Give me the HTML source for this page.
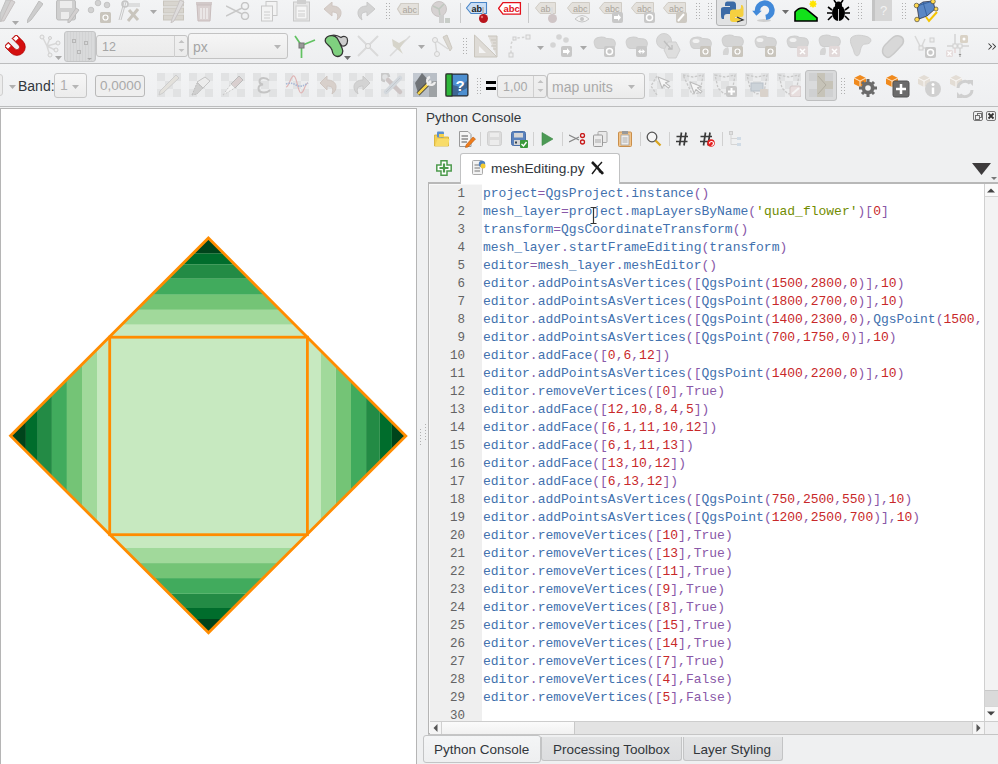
<!DOCTYPE html>
<html><head><meta charset="utf-8">
<style>
*{margin:0;padding:0;box-sizing:border-box}
html,body{width:998px;height:764px;overflow:hidden;background:#eff0f1;font-family:"Liberation Sans",sans-serif;position:relative}
.abs{position:absolute}
.tbrow{position:absolute;left:0;width:998px;background:linear-gradient(#f3f4f5,#eeeff1)}
.hsep{position:absolute;left:0;width:998px;height:1px;background:#bcbdbe}
.map{position:absolute;left:0;top:0}
.canvas{position:absolute;left:0;top:108px;width:417px;height:656px;background:#fff;border:1px solid #b5b5b5;border-bottom:none}
.title{position:absolute;left:426px;top:110px;font-size:13.5px;color:#31363b}
.editor{position:absolute;left:428px;top:182px;width:570px;height:553px;border:2px solid #b8b8b8;border-left:1px solid #b4b4b4;border-right:none;background:#fff;overflow:hidden}
.margin{position:absolute;left:0;top:0;width:53px;height:100%;background:#efefef;box-shadow:inset 1px 1px 0 #f8f8f8}
.nums{position:absolute;left:0;top:1px;width:36px;text-align:right;font-family:"Liberation Mono",monospace;font-size:12.5px;line-height:18px;color:#636363}
.code{position:absolute;left:54px;top:1px;font-family:"Liberation Mono",monospace;font-size:13px;line-height:18px;white-space:pre}
.code b{font-weight:normal}
.i{color:#4271ae}.o{color:#8959a8}.n{color:#c82829}.s{color:#718c00}.k{color:#8959a8}
.btab{position:absolute;top:736px;height:26px;font-size:13.5px;color:#31363b;border:1px solid #c3c4c5;border-radius:3px 3px 0 0;background:linear-gradient(#e6e7e8,#dcdddf);padding-top:4px;text-align:center}
.ico{position:absolute}
.lbl{position:absolute;font-size:13px;color:#a8a8a8}
.box{position:absolute;border:1px solid #bcbdbe;border-radius:3px;background:linear-gradient(#f5f5f5,#ebebeb)}
.dots{position:absolute;width:5px;background-image:radial-gradient(circle,#b0b0b0 0.7px,transparent 0.9px);background-size:3px 3px}
</style></head><body>
<div class="tbrow" style="top:0;height:28px"></div>
<div class="hsep" style="top:28px"></div>
<div class="tbrow" style="top:29px;height:34px"></div>
<div class="hsep" style="top:63px"></div>
<div class="tbrow" style="top:64px;height:42px"></div>
<div class="hsep" style="top:106px"></div>
<svg class="ico" style="left:0px;top:0px" width="16" height="22" viewBox="0 0 16 22" ><path d="M6 0L12 0L3 20L0 22L0 14Z" fill="#cfcfcf" stroke="#c0c0c0"/><path d="M11 0L15 2L4 21L1 21Z" fill="#d6d3d3" stroke="#c5c0c0"/></svg>
<svg class="ico" style="left:12px;top:21px" width="7" height="4" viewBox="0 0 7 4" ><path d="M0 0H7L3.5 4Z" fill="#a9a9a9"/></svg>
<svg class="ico" style="left:27px;top:1px" width="16" height="22" viewBox="0 0 16 22" ><path d="M12 0L16 3L4 19L0 22L1 18Z" fill="#cdcdcd" stroke="#bdbdbd" stroke-width="1"/></svg>
<svg class="ico" style="left:56px;top:0px" width="24" height="23" viewBox="0 0 24 23" ><rect x="0.5" y="0" width="19" height="20" rx="2" fill="#cfcfcf" stroke="#bdbdbd"/><rect x="4" y="1" width="12" height="7" fill="#ececec"/><rect x="5" y="12" width="8" height="7" fill="#ececec"/><path d="M20 8L23 10L14 22L12 23L12 20Z" fill="#d3d0d0" stroke="#bdbdbd"/></svg>
<svg class="ico" style="left:87px;top:0px" width="25" height="24" viewBox="0 0 25 24" ><circle cx="4" cy="10" r="2.8" fill="#d2d2d2" stroke="#c4c4c4"/><circle cx="11" cy="3" r="2.8" fill="#d2d2d2" stroke="#c4c4c4"/><circle cx="20" cy="5" r="2.8" fill="#d2d2d2" stroke="#c4c4c4"/><rect x="13" y="12" width="11" height="11" rx="1.5" fill="#c9c5bd"/><circle cx="18.5" cy="17.5" r="2.5" fill="none" stroke="#fff" stroke-width="1.2"/></svg>
<svg class="ico" style="left:118px;top:0px" width="26" height="23" viewBox="0 0 26 23" ><path d="M1 20L6 2M3 20L8 2" stroke="#c8c8c8" stroke-width="1"/><circle cx="7" cy="4" r="3" fill="none" stroke="#c4c4c4" stroke-width="1.5"/><path d="M9 4H22M9 6H22" stroke="#c8c8c8"/><path d="M10 21L20 9M11 10L20 20" stroke="#c9c5bd" stroke-width="3"/></svg>
<svg class="ico" style="left:150px;top:10px" width="7" height="4" viewBox="0 0 7 4" ><path d="M0 0H7L3.5 4Z" fill="#a9a9a9"/></svg>
<svg class="ico" style="left:163px;top:0px" width="22" height="23" viewBox="0 0 22 23" ><rect x="0.5" y="1" width="20" height="5" fill="#d8d5cf" stroke="#c9c5bd"/><rect x="0.5" y="8" width="20" height="5" fill="#d8d5cf" stroke="#c9c5bd"/><rect x="0.5" y="15" width="20" height="5" fill="#d8d5cf" stroke="#c9c5bd"/><path d="M17 0L21 2L11 21L8 23L9 19Z" fill="#dedcdc" stroke="#c8c4c4"/></svg>
<svg class="ico" style="left:195px;top:0px" width="19" height="22" viewBox="0 0 19 22" ><rect x="1" y="2" width="16" height="3" fill="#d2c9c9"/><path d="M2 5H16L15 21H3Z" fill="#d9d0d0" stroke="#c9bdbd"/><path d="M6 8V19M9 8V19M12 8V19" stroke="#f0eded" stroke-width="1.5"/></svg>
<svg class="ico" style="left:226px;top:2px" width="24" height="18" viewBox="0 0 24 18" ><circle cx="19" cy="4" r="3.5" fill="none" stroke="#c5c5c5" stroke-width="1.5"/><circle cx="19" cy="14" r="3.5" fill="none" stroke="#c5c5c5" stroke-width="1.5"/><path d="M0 4L16 12M0 14L16 6" stroke="#c8c8c8" stroke-width="1.5"/></svg>
<svg class="ico" style="left:261px;top:1px" width="18" height="21" viewBox="0 0 18 21" ><rect x="5" y="0.5" width="11" height="14" fill="#f3f3f3" stroke="#c8c8c8"/><rect x="0.5" y="5" width="11" height="15" fill="#f3f3f3" stroke="#c8c8c8"/><path d="M3 11H9M3 14H9M3 17H9" stroke="#cdcdcd"/></svg>
<svg class="ico" style="left:293px;top:0px" width="18" height="22" viewBox="0 0 18 22" ><rect x="0.5" y="2" width="16" height="19" fill="#e6e6e6" stroke="#c8c8c8"/><rect x="4" y="0" width="9" height="4" fill="#cfcfcf"/><rect x="3" y="6" width="11" height="13" fill="#f5f5f5" stroke="#d0d0d0"/><path d="M5 11H12M5 14H12M5 16H12" stroke="#cdcdcd"/></svg>
<svg class="ico" style="left:324px;top:2px" width="20" height="19" viewBox="0 0 20 19" ><path d="M8 0L0 7L8 14V10C13 10 15 12 13 18C19 14 19 4 8 4Z" fill="#d8d0cb" stroke="#cfc6c1"/></svg>
<svg class="ico" style="left:355px;top:2px" width="20" height="19" viewBox="0 0 20 19" ><path d="M12 0L20 7L12 14V10C7 10 5 12 7 18C1 14 1 4 12 4Z" fill="#d3d3d3" stroke="#c9c9c9"/></svg>
<div class="dots" style="left:385px;top:2px;height:18px"></div>
<svg class="ico" style="left:397px;top:3px" width="22" height="12" viewBox="0 0 22 12" ><path d="M4 0.5H21.5V11.5H4L0.5 6Z" fill="#e4e1dc" stroke="#d0ccc5" stroke-width="1.2"/><text x="5.5" y="9.5" font-family="Liberation Sans" font-size="9" fill="#aaa59d">abc</text></svg>
<svg class="ico" style="left:430px;top:1px" width="23" height="22" viewBox="0 0 23 22" ><circle cx="9" cy="8" r="7.5" fill="#d6d2d2" stroke="#c9c4c4"/><path d="M3 5L9 8L14 3M9 8L10 15" stroke="#bfc8bf" stroke-width="1.5" fill="none"/><rect x="9" y="14" width="5" height="8" fill="#cfcfcf"/><rect x="15" y="17" width="5" height="5" fill="#c8cdc8"/></svg>
<div class="abs" style="left:460px;top:3px;width:1px;height:20px;background:#c8c9ca"></div>
<svg class="ico" style="left:466px;top:2px" width="24" height="22" viewBox="0 0 24 22" ><path d="M5 0.5H20.5V11.5H5L0.5 6Z" fill="#c9def5" stroke="#4a86c8" stroke-width="1.1"/><text x="5.5" y="9.5" font-family="Liberation Sans" font-size="9" font-weight="bold" fill="#1a1a1a">ab</text><path d="M17 5V14" stroke="#bbb" stroke-width="2"/><circle cx="17.5" cy="16.5" r="4.5" fill="#b8141c"/><circle cx="16" cy="15" r="1.2" fill="#e07070"/></svg>
<svg class="ico" style="left:498px;top:2px" width="24" height="13" viewBox="0 0 24 13" ><path d="M5 0.6H22.4V12.2H5L0.6 6.4Z" fill="#fff" stroke="#e3111b" stroke-width="1.3"/><text x="5.5" y="10.2" font-family="Liberation Sans" font-size="9.5" font-weight="bold" fill="#e3111b">abc</text></svg>
<div class="abs" style="left:528px;top:3px;width:1px;height:20px;background:#c8c9ca"></div>
<svg class="ico" style="left:535px;top:2px" width="24" height="22" viewBox="0 0 24 22" ><path d="M5 0.5H20.5V11.5H5L0.5 6Z" fill="#e4e1dc" stroke="#d0ccc5"/><text x="5.5" y="9.5" font-family="Liberation Sans" font-size="9" fill="#aaa59d">ab</text><path d="M17 5V14" stroke="#ddd" stroke-width="2"/><circle cx="17.5" cy="16.5" r="4.5" fill="#cfc5c6"/></svg>
<svg class="ico" style="left:567px;top:2px" width="24" height="21" viewBox="0 0 24 21" ><path d="M5 0.5H22.5V11.5H5L0.5 6Z" fill="#e4e1dc" stroke="#d0ccc5"/><text x="6" y="9.5" font-family="Liberation Sans" font-size="9" fill="#aaa59d">abc</text><path d="M8 17Q15 10 22 17Q15 23 8 17Z" fill="#f2f2f2" stroke="#c6c6c6"/><circle cx="15" cy="17" r="2" fill="#c6c6c6"/></svg>
<svg class="ico" style="left:599px;top:2px" width="25" height="21" viewBox="0 0 25 21" ><path d="M5 0.5H22.5V11.5H5L0.5 6Z" fill="#e4e1dc" stroke="#d0ccc5"/><text x="6" y="9.5" font-family="Liberation Sans" font-size="9" fill="#aaa59d">abc</text><rect x="13" y="10" width="11" height="11" rx="2" fill="#c8c8c8"/><path d="M15 14H19V12L22 15.5L19 19V17H15Z" fill="#fff"/></svg>
<svg class="ico" style="left:631px;top:2px" width="25" height="21" viewBox="0 0 25 21" ><path d="M5 0.5H22.5V11.5H5L0.5 6Z" fill="#e4e1dc" stroke="#d0ccc5"/><text x="6" y="9.5" font-family="Liberation Sans" font-size="9" fill="#aaa59d">abc</text><rect x="13" y="10" width="11" height="11" rx="2" fill="#c8c8c8"/><circle cx="18.5" cy="15.5" r="3" fill="none" stroke="#fff" stroke-width="1.5"/></svg>
<svg class="ico" style="left:663px;top:2px" width="25" height="21" viewBox="0 0 25 21" ><path d="M5 0.5H22.5V11.5H5L0.5 6Z" fill="#e4e1dc" stroke="#d0ccc5"/><text x="6" y="9.5" font-family="Liberation Sans" font-size="9" fill="#aaa59d">abc</text><rect x="13" y="10" width="11" height="11" rx="2" fill="#cdc9c2"/><path d="M15 19L21 12" stroke="#fff" stroke-width="2"/></svg>
<div class="dots" style="left:695px;top:2px;height:18px"></div>
<div class="dots" style="left:707px;top:2px;height:18px"></div>
<div class="abs" style="left:716px;top:-3px;width:31px;height:29px;border:1px solid #b3b4b5;border-radius:3px;background:#e1e2e3"></div>
<svg class="ico" style="left:721px;top:1px" width="24" height="22" viewBox="0 0 24 22" ><path d="M6 0.5H12Q15 0.5 15 4V11Q15 13 12 13H6Q3 13 3 16V18H1.5Q0 18 0 14V8Q0 6 3 6H9V5H4V3Q4 0.5 6 0.5Z" fill="#3b6aa6"/><path d="M18 21H12Q9 21 9 18V11Q9 8.5 12 8.5H17Q20 8.5 20 6V4H20.5Q22.5 4 22.5 8V14Q22.5 16 20 16H14V17H19V19Q19 21 18 21Z" fill="#f5d040"/><path d="M16 16L22 19L16 21" fill="none" stroke="#333" stroke-width="1.3"/></svg>
<svg class="ico" style="left:748px;top:0px" width="28" height="24" viewBox="0 0 28 24" ><ellipse cx="16" cy="20.5" rx="7" ry="1.5" fill="#cfcfcf"/><path d="M17.8 17.4A7.2 7.2 0 1 0 9.6 11.2" fill="none" stroke="#4189d9" stroke-width="5.5"/><path d="M4.2 10.8L13.8 10.8L8.4 15.8Z" fill="#4189d9"/></svg>
<svg class="ico" style="left:782px;top:10px" width="7" height="4" viewBox="0 0 7 4" ><path d="M0 0H7L3.5 4Z" fill="#6d6d6d"/></svg>
<svg class="ico" style="left:794px;top:0px" width="25" height="22" viewBox="0 0 25 22" ><path d="M1 21V12Q6 6 12 9L23 18V21Z" fill="#12e21a" stroke="#000" stroke-width="1.6"/><circle cx="19" cy="4" r="3" fill="#ffe400"/><path d="M19 0V8M15 4H23M16 1L22 7M22 1L16 7" stroke="#ffe400" stroke-width="0.8"/></svg>
<svg class="ico" style="left:827px;top:0px" width="23" height="22" viewBox="0 0 23 22" ><ellipse cx="11.5" cy="13" rx="6.5" ry="8" fill="#000"/><circle cx="11.5" cy="5" r="3.5" fill="#000"/><path d="M1 7L5 10M22 7L18 10M0 13H5M23 13H18M1 20L5 16M22 20L18 16M7 0L9 3M16 0L14 3" stroke="#000" stroke-width="1.6"/><path d="M11.5 9V21" stroke="#fff" stroke-width="0.8"/></svg>
<div class="dots" style="left:857px;top:2px;height:18px"></div>
<svg class="ico" style="left:872px;top:0px" width="22" height="22" viewBox="0 0 22 22" ><rect x="0" y="0" width="20" height="21" fill="#d6d6d6"/><rect x="0" y="0" width="3" height="21" fill="#c4c4c4"/><text x="11.5" y="15" text-anchor="middle" font-family="Liberation Sans" font-size="13" fill="#f2f2f2">?</text></svg>
<div class="dots" style="left:901px;top:2px;height:18px"></div>
<svg class="ico" style="left:5px;top:35px" width="24" height="24" viewBox="0 0 24 24" ><g transform="rotate(-45 12 12) translate(3.5 2.5) scale(1.05)"><path d="M0 0H5.5V9A2.5 2.5 0 0 0 10.5 9V0H16V9A8 8 0 0 1 0 9Z" fill="#d40f0f" stroke="#a00" stroke-width="0.6"/><rect x="0.5" y="0.5" width="4.5" height="4" fill="#fff" stroke="#b00" stroke-width="0.7"/><rect x="11" y="0.5" width="4.5" height="4" fill="#fff" stroke="#b00" stroke-width="0.7"/></g></svg>
<svg class="ico" style="left:38px;top:34px" width="24" height="24" viewBox="0 0 24 24" ><path d="M4 2L9 12L12 22M9 12L12 4M9 12L20 9M9 12L17 16" stroke="#d8d8d8" stroke-width="1.5" fill="none"/><circle cx="4" cy="3" r="2" fill="#eee" stroke="#cfcfcf"/><circle cx="20" cy="9" r="2" fill="#eee" stroke="#cfcfcf"/><circle cx="12" cy="21" r="2" fill="#eee" stroke="#cfcfcf"/><circle cx="18" cy="16" r="2" fill="#eee" stroke="#cfcfcf"/><circle cx="12" cy="4" r="1.5" fill="#eee" stroke="#cfcfcf"/></svg>
<svg class="ico" style="left:55px;top:56px" width="7" height="4" viewBox="0 0 7 4" ><path d="M0 0H7L3.5 4Z" fill="#a9a9a9"/></svg>
<div class="abs" style="left:64px;top:31px;width:32px;height:31px;border:1px solid #c4c5c6;border-radius:3px;background:repeating-linear-gradient(90deg,#d9dadb 0 2px,#d2d3d4 2px 3px)"></div>
<svg class="ico" style="left:64px;top:31px" width="32" height="31" viewBox="0 0 32 31" ><rect x="8.5" y="8.5" width="3" height="3" fill="none" stroke="#b7b7b7"/><rect x="20.5" y="10.5" width="3" height="3" fill="none" stroke="#b7b7b7"/><rect x="13.5" y="19.5" width="3" height="3" fill="none" stroke="#b7b7b7"/><path d="M23 27H28L25.5 29Z" fill="#aaa"/></svg>
<div class="box" style="left:96px;top:35px;width:92px;height:22px;background:linear-gradient(#f0f0f0,#ebebeb);border-color:#c3c3c3"></div>
<div class="abs" style="left:174px;top:36px;width:1px;height:21px;background:#cfcfcf"></div>
<svg class="ico" style="left:177px;top:37px" width="9" height="18" viewBox="0 0 9 18" ><path d="M1.5 6L4.5 3L7.5 6Z" fill="#c2c2c2"/><path d="M1.5 12L4.5 15L7.5 12Z" fill="#c2c2c2"/></svg>
<div class="lbl" style="left:102px;top:40px;font-size:12.5px;color:#a5a5a5">12</div>
<div class="box" style="left:188px;top:33px;width:100px;height:26px;border-color:#c3c3c3;background:linear-gradient(#f6f6f6,#ebebeb)"></div>
<div class="lbl" style="left:193px;top:38.5px;font-size:14px;color:#a5a5a5">px</div>
<svg class="ico" style="left:274px;top:45px" width="7" height="4" viewBox="0 0 7 4" ><path d="M0 0H7L3.5 4Z" fill="#b6b6b6"/></svg>
<svg class="ico" style="left:293px;top:35px" width="23" height="23" viewBox="0 0 23 23" ><path d="M8.5 10.5L2 1M8.5 10.5L22 5M8.5 10.5V23" stroke="#62c262" stroke-width="1.7" fill="none"/><rect x="6" y="8" width="5" height="5" fill="#999" stroke="#777"/></svg>
<svg class="ico" style="left:324px;top:34px" width="26" height="27" viewBox="0 0 26 27" ><path d="M7 1.5C10 0.5 14 1.5 17 3.5C20 1.5 24 2.5 23.5 7C23.5 11 20.5 12.5 18 12C16 10 14 6 11 3Z" fill="#cdcdcd" stroke="#3a3a3a" stroke-width="1.2"/><path d="M3 3C6 0.5 11 1.5 13 4C15 7 16 10 18 14C20 18 18 22.5 13.5 22.5C10 22.5 8.5 19.5 8 16C7 12 1.5 10.5 1.2 7C1 5 1.5 4 3 3Z" fill="#7fd07f" stroke="#333" stroke-width="1.3"/></svg>
<svg class="ico" style="left:344px;top:56px" width="7" height="4" viewBox="0 0 7 4" ><path d="M0 0H7L3.5 4Z" fill="#6d6d6d"/></svg>
<svg class="ico" style="left:356px;top:34px" width="24" height="24" viewBox="0 0 24 24" ><path d="M2 2L22 22M22 2L2 22" stroke="#dadada" stroke-width="2"/><circle cx="12" cy="12" r="2.5" fill="#eee" stroke="#cfcfcf"/></svg>
<svg class="ico" style="left:388px;top:34px" width="24" height="24" viewBox="0 0 24 24" ><path d="M2 22L22 2" stroke="#dadada" stroke-width="1.6"/><path d="M4 5L11 9L18 5L12 14L15 20L9 15L5 12Z" fill="#d6d4ca"/></svg>
<svg class="ico" style="left:418px;top:45px" width="7" height="4" viewBox="0 0 7 4" ><path d="M0 0H7L3.5 4Z" fill="#a9a9a9"/></svg>
<svg class="ico" style="left:430px;top:34px" width="24" height="24" viewBox="0 0 24 24" ><path d="M5 6L18 15M5 6L7 20" stroke="#d8d8d8" stroke-width="1.5"/><circle cx="5" cy="6" r="2.5" fill="#eee" stroke="#cfcfcf"/><circle cx="7" cy="20" r="2.5" fill="#eee" stroke="#cfcfcf"/><path d="M13 3L17 1L22 14L20 17Z" fill="#dad7d0" stroke="#cdc9c1"/></svg>
<div class="dots" style="left:462px;top:37px;height:18px"></div>
<svg class="ico" style="left:474px;top:34px" width="26" height="24" viewBox="0 0 26 24" ><path d="M0.5 1V23H23Z" fill="#dedbd6" stroke="#c9c5bd"/><path d="M5 12V19H12Z" fill="#f4f4f4"/><path d="M14 2H23V23" fill="#dedbd6" stroke="#c9c5bd"/><path d="M17 6H22M19 9H22M17 12H22M19 15H22" stroke="#c9c5bd"/></svg>
<svg class="ico" style="left:508px;top:34px" width="24" height="24" viewBox="0 0 24 24" ><path d="M3 19V12Q3 6 9 4L18 3" stroke="#d3d3d3" stroke-width="1.5" stroke-dasharray="2.5 2" fill="none"/><rect x="1" y="19" width="4" height="4" fill="#eee" stroke="#cdcdcd"/><rect x="18" y="1" width="4" height="4" fill="#eee" stroke="#cdcdcd"/><rect x="5" y="3" width="3" height="3" fill="#eee" stroke="#cdcdcd"/></svg>
<svg class="ico" style="left:537px;top:46px" width="7" height="4" viewBox="0 0 7 4" ><path d="M0 0H7L3.5 4Z" fill="#a9a9a9"/></svg>
<svg class="ico" style="left:549px;top:34px" width="25" height="25" viewBox="0 0 25 25" ><circle cx="4" cy="11" r="2.8" fill="#d5d5d5"/><circle cx="10" cy="3" r="2.8" fill="#d5d5d5"/><circle cx="17" cy="6" r="2.8" fill="#d5d5d5"/><rect x="12" y="12" width="11" height="11" rx="2" fill="#c8c8c8"/><path d="M14 16H18V14L21 17.5L18 21V19H14Z" fill="#fff"/></svg>
<svg class="ico" style="left:580px;top:46px" width="7" height="4" viewBox="0 0 7 4" ><path d="M0 0H7L3.5 4Z" fill="#a9a9a9"/></svg>
<svg class="ico" style="left:592px;top:34px" width="24" height="25" viewBox="0 0 24 25" ><path transform="translate(1 3) scale(1.3)" d="M1 5C0 0,7 -1,10 1C13 2,16 0,17 4C18 8,14 10,10 9C6 8,2 11,1 5Z" fill="#d5d5d5" stroke="#cfcfcf" stroke-width="0.8"/><rect x="12" y="12" width="11" height="11" rx="2" fill="#c8c8c8"/><circle cx="17.5" cy="17.5" r="3" fill="none" stroke="#fff" stroke-width="1.5"/></svg>
<svg class="ico" style="left:624px;top:34px" width="24" height="25" viewBox="0 0 24 25" ><path transform="translate(1 3) scale(1.3)" d="M1 5C0 0,7 -1,10 1C13 2,16 0,17 4C18 8,14 10,10 9C6 8,2 11,1 5Z" fill="#d5d5d5" stroke="#cfcfcf" stroke-width="0.8"/><rect x="12" y="12" width="11" height="11" rx="2" fill="#c8c8c8"/><path d="M14 17.5L16.5 15V20ZM21 17.5L18.5 15V20Z" fill="#fff"/><path d="M16 17.5H19" stroke="#fff" stroke-width="1.5"/></svg>
<svg class="ico" style="left:656px;top:33px" width="25" height="26" viewBox="0 0 25 26" ><circle cx="8" cy="8" r="7.5" fill="#d8d8d8" stroke="#d0d0d0"/><path d="M12 9H20L24 17L20 25H12L8 17Z" fill="#dedede" stroke="#cfcfcf"/><path d="M8 8L15 16M12 16H16V12" stroke="#bdbdbd" stroke-width="1.3" fill="none"/></svg>
<svg class="ico" style="left:688px;top:34px" width="24" height="25" viewBox="0 0 24 25" ><path transform="translate(1 3) scale(1.3)" d="M1 5C0 0,7 -1,10 1C13 2,16 0,17 4C18 8,14 10,10 9C6 8,2 11,1 5Z" fill="#d5d5d5" stroke="#cfcfcf" stroke-width="0.8"/><ellipse cx="8" cy="7" rx="3.5" ry="2" fill="#f2f2f2"/><rect x="12" y="12" width="11" height="11" rx="1.5" fill="#c9c5bd"/><circle cx="17.5" cy="17.5" r="2.5" fill="none" stroke="#fff" stroke-width="1.2"/></svg>
<svg class="ico" style="left:720px;top:34px" width="24" height="25" viewBox="0 0 24 25" ><path transform="translate(1 1) scale(1.3)" d="M1 5C0 0,7 -1,10 1C13 2,16 0,17 4C18 8,14 10,10 9C6 8,2 11,1 5Z" fill="#d5d5d5" stroke="#cfcfcf" stroke-width="0.8"/><path d="M3 21Q2 14 8 13Q10 17 8 21Z" fill="#d5d5d5"/><rect x="12" y="12" width="11" height="11" rx="1.5" fill="#c9c5bd"/><circle cx="17.5" cy="17.5" r="2.5" fill="none" stroke="#fff" stroke-width="1.2"/></svg>
<svg class="ico" style="left:753px;top:34px" width="24" height="25" viewBox="0 0 24 25" ><path transform="translate(1 2) scale(1.3)" d="M1 5C0 0,7 -1,10 1C13 2,16 0,17 4C18 8,14 10,10 9C6 8,2 11,1 5Z" fill="#d5d5d5" stroke="#cfcfcf" stroke-width="0.8"/><ellipse cx="7" cy="6" rx="3.5" ry="2" fill="#f2f2f2"/><rect x="12" y="12" width="11" height="11" rx="1.5" fill="#c9c5bd"/><circle cx="17.5" cy="17.5" r="2.5" fill="none" stroke="#fff" stroke-width="1.2"/></svg>
<svg class="ico" style="left:785px;top:34px" width="24" height="25" viewBox="0 0 24 25" ><path transform="translate(1 2) scale(1.3)" d="M1 5C0 0,7 -1,10 1C13 2,16 0,17 4C18 8,14 10,10 9C6 8,2 11,1 5Z" fill="#d5d5d5" stroke="#cfcfcf" stroke-width="0.8"/><ellipse cx="8" cy="6" rx="3.5" ry="2" fill="#f2f2f2"/><rect x="12" y="12" width="11" height="11" rx="1.5" fill="#e2d9d9"/><path d="M15 15L20 20M20 15L15 20" stroke="#fff" stroke-width="1.5"/></svg>
<svg class="ico" style="left:817px;top:34px" width="24" height="25" viewBox="0 0 24 25" ><path transform="translate(1 1) scale(1.3)" d="M1 5C0 0,7 -1,10 1C13 2,16 0,17 4C18 8,14 10,10 9C6 8,2 11,1 5Z" fill="#d5d5d5" stroke="#cfcfcf" stroke-width="0.8"/><path d="M3 21Q2 14 8 13Q10 17 8 21Z" fill="#d5d5d5"/><rect x="12" y="12" width="11" height="11" rx="1.5" fill="#e2d9d9"/><path d="M15 15L20 20M20 15L15 20" stroke="#fff" stroke-width="1.5"/></svg>
<svg class="ico" style="left:849px;top:34px" width="24" height="25" viewBox="0 0 24 25" ><path d="M2 4C5 0 14 1 19 3C24 5 22 10 17 10C13 10 12 13 11 18C10 23 6 23 5 18C4 13 0 9 2 4Z" fill="#d8d8d8" stroke="#cfcfcf"/></svg>
<svg class="ico" style="left:881px;top:34px" width="24" height="25" viewBox="0 0 24 25" ><path d="M4 22C0 19 1 13 6 9C10 5 13 1 18 2C23 3 24 8 20 12C16 16 14 19 10 22C8 24 6 24 4 22Z" fill="#d8d8d8" stroke="#c9c9c9" stroke-width="1.5"/></svg>
<svg class="ico" style="left:913px;top:34px" width="24" height="25" viewBox="0 0 24 25" ><path d="M2 2L8 14L12 5M8 14H19" stroke="#d8d8d8" stroke-width="1.5" fill="none"/><rect x="6" y="12" width="4" height="4" fill="#eee" stroke="#cfcfcf"/><rect x="17" y="4" width="4" height="4" fill="#eee" stroke="#cfcfcf"/><rect x="12" y="13" width="11" height="11" rx="2" fill="#c8c8c8"/><circle cx="17.5" cy="18.5" r="3" fill="none" stroke="#fff" stroke-width="1.5"/></svg>
<svg class="ico" style="left:945px;top:33px" width="25" height="26" viewBox="0 0 25 26" ><path d="M10 1V14M15 14V24M2 13H24" stroke="#d3d3d3" stroke-width="1.5"/><path d="M10 14V20" stroke="#e0c8c8" stroke-width="1"/><rect x="8" y="11" width="4" height="4" fill="#f2f2f2" stroke="#cfcfcf"/><rect x="13" y="11" width="4" height="4" fill="#f2f2f2" stroke="#cfcfcf"/><rect x="15" y="2" width="8" height="8" rx="1.5" fill="#d9d2c6"/><circle cx="19" cy="6" r="1.5" fill="#fff"/><rect x="1" y="17" width="7" height="7" rx="1.5" fill="#e5dcdc"/><path d="M2.5 18.5L6.5 22.5M6.5 18.5L2.5 22.5" stroke="#fff" stroke-width="1.2"/><path d="M14 21L15 24L16 21" stroke="#c8c8c8"/></svg>
<svg class="ico" style="left:988px;top:43px" width="8" height="7" viewBox="0 0 8 7" ><path d="M0.5 0.5L3.5 3.5L0.5 6.5M4.5 0.5L7.5 3.5L4.5 6.5" fill="none" stroke="#3c3c3c" stroke-width="1.05"/></svg>
<div class="abs" style="left:-10px;top:74px;width:13px;height:22px;border:1px solid #cfcfcf;border-radius:3px;background:#ececec"></div>
<svg class="ico" style="left:9px;top:85px" width="7" height="4" viewBox="0 0 7 4" ><path d="M0 0H7L3.5 4Z" fill="#b0b0b0"/></svg>
<div class="abs" style="left:18px;top:78px;font-size:14px;color:#31363b">Band:</div>
<div class="box" style="left:54px;top:73px;width:33px;height:25px;border-color:#c6c6c6;background:linear-gradient(#f6f6f6,#ececec)"></div>
<div class="lbl" style="left:60px;top:77px;font-size:14px;color:#b0b0b0">1</div>
<svg class="ico" style="left:72px;top:85px" width="7" height="4" viewBox="0 0 7 4" ><path d="M0 0H7L3.5 4Z" fill="#b6b6b6"/></svg>
<div class="box" style="left:95px;top:75px;width:50px;height:22px;border-color:#b9b9b9;background:#efefef"></div>
<div class="lbl" style="left:100px;top:78px;font-size:13.5px;color:#a9a9a9">0,0000</div>
<svg class="ico" style="left:157px;top:73px" width="24" height="24" viewBox="0 0 24 24" ><rect width="24" height="24" fill="#ecedee"/><rect x="0" y="0" width="8" height="8" fill="#e1e2e3"/><rect x="16" y="0" width="8" height="8" fill="#e1e2e3"/><rect x="8" y="8" width="8" height="8" fill="#e1e2e3"/><rect x="0" y="16" width="8" height="8" fill="#e1e2e3"/><rect x="16" y="16" width="8" height="8" fill="#e1e2e3"/><path d="M19 2L22 5L6 20L2 22L3 18Z" fill="#e3e1dc" stroke="#cdcdcd"/></svg>
<svg class="ico" style="left:189px;top:73px" width="24" height="24" viewBox="0 0 24 24" ><rect width="24" height="24" fill="#ecedee"/><rect x="0" y="0" width="8" height="8" fill="#e1e2e3"/><rect x="16" y="0" width="8" height="8" fill="#e1e2e3"/><rect x="8" y="8" width="8" height="8" fill="#e1e2e3"/><rect x="0" y="16" width="8" height="8" fill="#e1e2e3"/><rect x="16" y="16" width="8" height="8" fill="#e1e2e3"/><path d="M8 9L16 4L21 8L14 15Z" fill="#ececec" stroke="#c4c4c4"/><path d="M3 22L8 10L14 15L8 21Z" fill="#cfcfcf" stroke="#bdbdbd" stroke-dasharray="2 1"/></svg>
<svg class="ico" style="left:221px;top:73px" width="24" height="24" viewBox="0 0 24 24" ><rect width="24" height="24" fill="#ecedee"/><rect x="0" y="0" width="8" height="8" fill="#e1e2e3"/><rect x="16" y="0" width="8" height="8" fill="#e1e2e3"/><rect x="8" y="8" width="8" height="8" fill="#e1e2e3"/><rect x="0" y="16" width="8" height="8" fill="#e1e2e3"/><rect x="16" y="16" width="8" height="8" fill="#e1e2e3"/><path d="M10 11L18 3L22 7L14 15Z" fill="#d9cfcf" stroke="#bbb"/><path d="M2 22L10 11L14 15Z" fill="#f4f4f4" stroke="#c9c9c9" stroke-dasharray="2 1.5"/></svg>
<svg class="ico" style="left:253px;top:73px" width="24" height="24" viewBox="0 0 24 24" ><rect width="24" height="24" fill="#ecedee"/><rect x="0" y="0" width="8" height="8" fill="#e1e2e3"/><rect x="16" y="0" width="8" height="8" fill="#e1e2e3"/><rect x="8" y="8" width="8" height="8" fill="#e1e2e3"/><rect x="0" y="16" width="8" height="8" fill="#e1e2e3"/><rect x="16" y="16" width="8" height="8" fill="#e1e2e3"/><path d="M16 7.5Q14 5 10.5 5Q6.5 5 6.5 8.5Q6.5 11 10 11.5Q5.5 12 5.5 15.5Q5.5 19.5 11 19.5Q15 19.5 17 17" fill="none" stroke="#c4c4c4" stroke-width="2"/></svg>
<svg class="ico" style="left:285px;top:73px" width="24" height="24" viewBox="0 0 24 24" ><rect width="24" height="24" fill="#ecedee"/><rect x="0" y="0" width="8" height="8" fill="#e1e2e3"/><rect x="16" y="0" width="8" height="8" fill="#e1e2e3"/><rect x="8" y="8" width="8" height="8" fill="#e1e2e3"/><rect x="0" y="16" width="8" height="8" fill="#e1e2e3"/><rect x="16" y="16" width="8" height="8" fill="#e1e2e3"/><path d="M1 14C4 14 6 2 9 3C12 4 13 20 16 20C19 20 20 10 23 10" fill="none" stroke="#dfb3b3" stroke-width="1.2"/><path d="M1 11Q6 9 11 12T23 10" fill="none" stroke="#a9b9d6" stroke-width="1.6" stroke-dasharray="1.5 1"/></svg>
<svg class="ico" style="left:317px;top:73px" width="24" height="24" viewBox="0 0 24 24" ><rect width="24" height="24" fill="#ecedee"/><rect x="0" y="0" width="8" height="8" fill="#e1e2e3"/><rect x="16" y="0" width="8" height="8" fill="#e1e2e3"/><rect x="8" y="8" width="8" height="8" fill="#e1e2e3"/><rect x="0" y="16" width="8" height="8" fill="#e1e2e3"/><rect x="16" y="16" width="8" height="8" fill="#e1e2e3"/><path d="M10 3L3 10L10 17V13C15 13 17 15 15 21C21 17 21 7 10 7Z" fill="#d8d0cb" stroke="#cfc6c1"/></svg>
<svg class="ico" style="left:349px;top:73px" width="24" height="24" viewBox="0 0 24 24" ><rect width="24" height="24" fill="#ecedee"/><rect x="0" y="0" width="8" height="8" fill="#e1e2e3"/><rect x="16" y="0" width="8" height="8" fill="#e1e2e3"/><rect x="8" y="8" width="8" height="8" fill="#e1e2e3"/><rect x="0" y="16" width="8" height="8" fill="#e1e2e3"/><rect x="16" y="16" width="8" height="8" fill="#e1e2e3"/><path d="M14 3L21 10L14 17V13C9 13 7 15 9 21C3 17 3 7 14 7Z" fill="#d3d3d3" stroke="#c9c9c9"/></svg>
<svg class="ico" style="left:381px;top:73px" width="24" height="24" viewBox="0 0 24 24" ><rect width="24" height="24" fill="#ecedee"/><rect x="0" y="0" width="8" height="8" fill="#e1e2e3"/><rect x="16" y="0" width="8" height="8" fill="#e1e2e3"/><rect x="8" y="8" width="8" height="8" fill="#e1e2e3"/><rect x="0" y="16" width="8" height="8" fill="#e1e2e3"/><rect x="16" y="16" width="8" height="8" fill="#e1e2e3"/><path d="M7 7L19 19" stroke="#cdc5c5" stroke-width="4.5" stroke-linecap="round"/><path d="M8 4A4 4 0 1 0 4 8" fill="none" stroke="#c9c9c9" stroke-width="2.5"/><path d="M5 19L19 5" stroke="#d3d8dd" stroke-width="4.5" stroke-linecap="round"/><path d="M5 19L19 5" stroke="#bfc4c9" stroke-width="0.8"/></svg>
<svg class="ico" style="left:413px;top:73px" width="24" height="24" viewBox="0 0 24 24" ><rect width="24" height="24" fill="#b9bfc6"/><rect x="0" y="0" width="8" height="8" fill="#c3c9d1"/><rect x="16" y="8" width="8" height="16" fill="#9ea2a5"/><path d="M9 0L16 8L12 16L5 20L2 10Z" fill="#707478"/><path d="M5 21L15 11" stroke="#333" stroke-width="4"/><path d="M5 21L15 11" stroke="#f2d04a" stroke-width="2.5"/><path d="M14 12L18 8M17 4A4 4 0 1 0 22 9" fill="none" stroke="#eee" stroke-width="2.5"/></svg>
<svg class="ico" style="left:445px;top:73px" width="24" height="24" viewBox="0 0 24 24" ><rect x="1" y="1" width="22" height="22" rx="1" fill="#3d6694" stroke="#222" stroke-width="1"/><rect x="1" y="1" width="6" height="22" fill="#2fb63a" stroke="#222" stroke-width="1"/><path d="M8 2H22V8L15 14L8 12Z" fill="#4d8fd0"/><path d="M13 20L22 15V22H13Z" fill="#4d8fd0"/><text x="15" y="18" text-anchor="middle" font-family="Liberation Sans" font-size="15" font-weight="bold" fill="#fff">?</text></svg>
<div class="dots" style="left:476px;top:77px;height:17px"></div>
<div class="abs" style="left:486px;top:81px;width:10px;height:3px;background:#000"></div><div class="abs" style="left:486px;top:87px;width:10px;height:3px;background:#000"></div>
<div class="box" style="left:497px;top:75px;width:50px;height:23px;border-color:#c3c3c3;background:linear-gradient(#f0f0f0,#ebebeb)"></div>
<div class="abs" style="left:533px;top:76px;width:1px;height:21px;background:#cfcfcf"></div>
<svg class="ico" style="left:536px;top:77px" width="9" height="18" viewBox="0 0 9 18" ><path d="M1.5 6L4.5 3L7.5 6Z" fill="#c2c2c2"/><path d="M1.5 12L4.5 15L7.5 12Z" fill="#c2c2c2"/></svg>
<div class="lbl" style="left:503px;top:80px;font-size:12.5px;color:#a9a9a9">1,00</div>
<div class="box" style="left:547px;top:73px;width:98px;height:26px;border-color:#c3c3c3;background:linear-gradient(#f6f6f6,#ebebeb)"></div>
<div class="lbl" style="left:552px;top:78.5px;font-size:14px;color:#a9a9a9">map units</div>
<svg class="ico" style="left:628px;top:85px" width="7" height="4" viewBox="0 0 7 4" ><path d="M0 0H7L3.5 4Z" fill="#b6b6b6"/></svg>
<svg class="ico" style="left:649px;top:73px" width="24" height="24" viewBox="0 0 24 24" ><rect width="24" height="24" fill="#ecedee"/><rect x="0" y="0" width="8" height="8" fill="#e1e2e3"/><rect x="16" y="0" width="8" height="8" fill="#e1e2e3"/><rect x="8" y="8" width="8" height="8" fill="#e1e2e3"/><rect x="0" y="16" width="8" height="8" fill="#e1e2e3"/><rect x="16" y="16" width="8" height="8" fill="#e1e2e3"/><path d="M8 3L2 13L8 22" stroke="#c8c8c8" stroke-width="1.3" stroke-dasharray="2.5 1.5" fill="none"/><path d="M9 4V16L12 13L15 18L17 17L14 12H18Z" fill="#f6f6f6" stroke="#bbbbbb" stroke-linejoin="round" transform="rotate(-20 9 4)"/></svg>
<svg class="ico" style="left:681px;top:73px" width="24" height="24" viewBox="0 0 24 24" ><rect width="24" height="24" fill="#ecedee"/><rect x="0" y="0" width="8" height="8" fill="#e1e2e3"/><rect x="16" y="0" width="8" height="8" fill="#e1e2e3"/><rect x="8" y="8" width="8" height="8" fill="#e1e2e3"/><rect x="0" y="16" width="8" height="8" fill="#e1e2e3"/><rect x="16" y="16" width="8" height="8" fill="#e1e2e3"/><path d="M2 2L12 4L22 2L19 20L11 21Z" stroke="#c8c8c8" stroke-width="1.3" stroke-dasharray="2.5 1.5" fill="none"/><path d="M9 9V21L12 18L15 23L17 22L14 17H18Z" fill="#f6f6f6" stroke="#bbbbbb" stroke-linejoin="round" transform="rotate(-20 9 9)"/></svg>
<svg class="ico" style="left:713px;top:73px" width="24" height="24" viewBox="0 0 24 24" ><rect width="24" height="24" fill="#ecedee"/><rect x="0" y="0" width="8" height="8" fill="#e1e2e3"/><rect x="16" y="0" width="8" height="8" fill="#e1e2e3"/><rect x="8" y="8" width="8" height="8" fill="#e1e2e3"/><rect x="0" y="16" width="8" height="8" fill="#e1e2e3"/><rect x="16" y="16" width="8" height="8" fill="#e1e2e3"/><path d="M2 2L12 4L22 2L19 20L11 21L5 15Z" stroke="#c8c8c8" stroke-width="1.3" stroke-dasharray="2.5 1.5" fill="none"/><rect x="13" y="13" width="11" height="11" rx="2" fill="#c9c9c9"/><path d="M18.5 15V22M15 18.5H22" stroke="#fff" stroke-width="2"/></svg>
<svg class="ico" style="left:745px;top:73px" width="24" height="24" viewBox="0 0 24 24" ><rect width="24" height="24" fill="#ecedee"/><rect x="0" y="0" width="8" height="8" fill="#e1e2e3"/><rect x="16" y="0" width="8" height="8" fill="#e1e2e3"/><rect x="8" y="8" width="8" height="8" fill="#e1e2e3"/><rect x="0" y="16" width="8" height="8" fill="#e1e2e3"/><rect x="16" y="16" width="8" height="8" fill="#e1e2e3"/><path d="M2 2L12 4L22 2L19 20L11 21L5 15Z" stroke="#c8c8c8" stroke-width="1.3" stroke-dasharray="2.5 1.5" fill="none"/><rect x="6" y="10" width="12" height="8" fill="#ccd3d9" stroke="#b8c0c8"/><rect x="15" y="16" width="8" height="8" rx="1" fill="#d9d2cb"/></svg>
<svg class="ico" style="left:777px;top:73px" width="24" height="24" viewBox="0 0 24 24" ><rect width="24" height="24" fill="#ecedee"/><rect x="0" y="0" width="8" height="8" fill="#e1e2e3"/><rect x="16" y="0" width="8" height="8" fill="#e1e2e3"/><rect x="8" y="8" width="8" height="8" fill="#e1e2e3"/><rect x="0" y="16" width="8" height="8" fill="#e1e2e3"/><rect x="16" y="16" width="8" height="8" fill="#e1e2e3"/><path d="M2 2L12 4L22 2L19 20L11 21L5 15Z" stroke="#c8c8c8" stroke-width="1.3" stroke-dasharray="2.5 1.5" fill="none"/><rect x="13" y="13" width="11" height="11" rx="2" fill="#e8dede" stroke="#d3c8c8"/><path d="M15 21L22 15" stroke="#f5f5f5" stroke-width="2"/></svg>
<div class="abs" style="left:805px;top:70px;width:32px;height:31px;border:1px solid #bebfc0;border-radius:3px;background:#d9dadb"></div>
<svg class="ico" style="left:809px;top:73px" width="24" height="24" viewBox="0 0 24 24" ><rect width="24" height="24" fill="#cfd0d1"/><rect x="8" y="0" width="8" height="24" fill="#c6c3b8"/><rect x="0" y="8" width="8" height="8" fill="#dadbdc"/><rect x="16" y="8" width="8" height="8" fill="#c6c3b8"/><path d="M9 3L17 12L9 21" fill="none" stroke="#b0aca0" stroke-width="1"/></svg>
<div class="dots" style="left:840px;top:77px;height:17px"></div>
<svg class="ico" style="left:853px;top:73px" width="25" height="25" viewBox="0 0 25 25" ><path d="M1 5L7 2L13 5V11L7 14L1 11Z" fill="#f08a1d"/><path d="M1 5L7 8L13 5M7 8V14" stroke="#fff" stroke-width="0.8" fill="none"/><circle cx="15" cy="15" r="6.5" fill="#6b6b6b"/><path d="M15 6V24M6 15H24M9 9L21 21M21 9L9 21" stroke="#6b6b6b" stroke-width="3"/><circle cx="15" cy="15" r="2.8" fill="#f1f1f1"/></svg>
<svg class="ico" style="left:885px;top:73px" width="25" height="25" viewBox="0 0 25 25" ><path d="M1 5L7 2L13 5V11L7 14L1 11Z" fill="#f08a1d"/><path d="M1 5L7 8L13 5M7 8V14" stroke="#fff" stroke-width="0.8" fill="none"/><rect x="8" y="8" width="16" height="16" rx="2" fill="#6b6b6b" stroke="#555"/><path d="M16 11V21M11 16H21" stroke="#fff" stroke-width="2.5"/></svg>
<svg class="ico" style="left:917px;top:73px" width="25" height="25" viewBox="0 0 25 25" ><path d="M1 5L7 2L13 5V11L7 14L1 11Z" fill="#e3ddd5"/><path d="M1 5L7 8L13 5M7 8V14" stroke="#fff" stroke-width="0.8" fill="none"/><circle cx="16" cy="16" r="8" fill="#d0d0d0"/><circle cx="16" cy="11.5" r="1.5" fill="#fff"/><path d="M16 14.5V21" stroke="#fff" stroke-width="2.5"/></svg>
<svg class="ico" style="left:949px;top:73px" width="25" height="25" viewBox="0 0 25 25" ><path d="M1 5L7 2L13 5V11L7 14L1 11Z" fill="#e3ddd5"/><path d="M1 5L7 8L13 5M7 8V14" stroke="#fff" stroke-width="0.8" fill="none"/><path d="M9 15A7 7 0 0 1 21 10.5" fill="none" stroke="#cfcfcf" stroke-width="3"/><path d="M23 17A7 7 0 0 1 11 21.5" fill="none" stroke="#cfcfcf" stroke-width="3"/><path d="M18 7H24V13Z M14 25H8V19Z" fill="#cfcfcf"/></svg>
<svg class="ico" style="left:913px;top:0px" width="26" height="23" viewBox="0 0 26 23" ><path d="M4 6L10 2L20 1L22 9L14 16L6 19Z" fill="#5a87c5" stroke="#334" stroke-width="0.8"/><path d="M4 6L20 1M10 2L14 16" stroke="#2d5a99" stroke-width="0.8"/><circle cx="3.5" cy="5.5" r="2.3" fill="#ffd84d" stroke="#333" stroke-width="0.6"/><circle cx="20" cy="1.5" r="2.3" fill="#ffd84d" stroke="#333" stroke-width="0.6"/><circle cx="4" cy="19.5" r="2.3" fill="#ffd84d" stroke="#333" stroke-width="0.6"/><circle cx="23" cy="9" r="2" fill="#ffd84d" stroke="#333" stroke-width="0.6"/><path d="M13 17L16 21L24 12" fill="none" stroke="#f5c400" stroke-width="2"/></svg>
<div class="canvas"></div>
<svg class="map" width="998" height="764" viewBox="0 0 998 764">
<defs><clipPath id="dia"><polygon points="208.4,238.0 405.8,435.9 208.5,632.7 10.5,435.8"/></clipPath></defs>
<g clip-path="url(#dia)">
<rect x="0" y="200" width="417" height="460" fill="#c7e9c0"/>
<rect x="0" y="238.0" width="417" height="15.6" fill="#00441b"/>
<rect x="0" y="619.0" width="417" height="13.7" fill="#00441b"/>
<rect x="0" y="253.6" width="417" height="10.9" fill="#006d2c"/>
<rect x="0" y="608.0" width="417" height="11.0" fill="#006d2c"/>
<rect x="0" y="264.5" width="417" height="14.2" fill="#238b45"/>
<rect x="0" y="593.7" width="417" height="14.3" fill="#238b45"/>
<rect x="0" y="278.7" width="417" height="16.0" fill="#41ab5d"/>
<rect x="0" y="578.1" width="417" height="15.6" fill="#41ab5d"/>
<rect x="0" y="294.7" width="417" height="15.1" fill="#74c476"/>
<rect x="0" y="563.1" width="417" height="15.0" fill="#74c476"/>
<rect x="0" y="309.8" width="417" height="14.8" fill="#a1d99b"/>
<rect x="0" y="547.9" width="417" height="15.2" fill="#a1d99b"/>
<rect x="0" y="324.6" width="417" height="12.6" fill="#c7e9c0"/>
<rect x="0" y="534.7" width="417" height="13.2" fill="#c7e9c0"/>
</g>
<clipPath id="lt"><polygon points="10.5,435.8 109.7,337.2 109.7,534.7"/></clipPath>
<clipPath id="rt"><polygon points="405.8,435.9 307.4,337.2 307.4,534.7"/></clipPath>
<g clip-path="url(#lt)">
<rect x="10.5" y="300" width="15.4" height="280" fill="#00441b"/>
<rect x="25.9" y="300" width="11.9" height="280" fill="#006d2c"/>
<rect x="37.8" y="300" width="14.1" height="280" fill="#238b45"/>
<rect x="51.9" y="300" width="15.0" height="280" fill="#41ab5d"/>
<rect x="66.9" y="300" width="15.1" height="280" fill="#74c476"/>
<rect x="82.0" y="300" width="15.0" height="280" fill="#a1d99b"/>
<rect x="97.0" y="300" width="12.7" height="280" fill="#c7e9c0"/>
</g><g clip-path="url(#rt)">
<rect x="391.9" y="300" width="13.9" height="280" fill="#00441b"/>
<rect x="379.8" y="300" width="12.1" height="280" fill="#006d2c"/>
<rect x="366.1" y="300" width="13.7" height="280" fill="#238b45"/>
<rect x="351.0" y="300" width="15.1" height="280" fill="#41ab5d"/>
<rect x="335.8" y="300" width="15.2" height="280" fill="#74c476"/>
<rect x="320.8" y="300" width="15.0" height="280" fill="#a1d99b"/>
<rect x="307.4" y="300" width="13.4" height="280" fill="#c7e9c0"/>
</g>
<rect x="109.7" y="337.2" width="197.7" height="197.5" fill="#c7e9c0"/>
<polygon points="208.4,238.0 405.8,435.9 208.5,632.7 10.5,435.8" fill="none" stroke="#ff8c00" stroke-width="2.8" stroke-linejoin="miter"/>
<rect x="109.7" y="337.2" width="197.7" height="197.5" fill="none" stroke="#ff8c00" stroke-width="2.8"/>
</svg>
<div class="title">Python Console</div>
<div class="editor">
 <div class="margin"></div>
 <div class="nums"><div>1</div>
<div>2</div>
<div>3</div>
<div>4</div>
<div>5</div>
<div>6</div>
<div>7</div>
<div>8</div>
<div>9</div>
<div>10</div>
<div>11</div>
<div>12</div>
<div>13</div>
<div>14</div>
<div>15</div>
<div>16</div>
<div>17</div>
<div>18</div>
<div>19</div>
<div>20</div>
<div>21</div>
<div>22</div>
<div>23</div>
<div>24</div>
<div>25</div>
<div>26</div>
<div>27</div>
<div>28</div>
<div>29</div>
<div>30</div></div>
 <div class="code"><div class="ln"><b class="i">project</b><b class="o">=</b><b class="i">QgsProject</b><b class="o">.</b><b class="i">instance</b><b class="o">(</b><b class="o">)</b></div><div class="ln"><b class="i">mesh_layer</b><b class="o">=</b><b class="i">project</b><b class="o">.</b><b class="i">mapLayersByName</b><b class="o">(</b><b class="s">&#x27;quad_flower&#x27;</b><b class="o">)</b><b class="o">[</b><b class="n">0</b><b class="o">]</b></div><div class="ln"><b class="i">transform</b><b class="o">=</b><b class="i">QgsCoordinateTransform</b><b class="o">(</b><b class="o">)</b></div><div class="ln"><b class="i">mesh_layer</b><b class="o">.</b><b class="i">startFrameEditing</b><b class="o">(</b><b class="i">transform</b><b class="o">)</b></div><div class="ln"><b class="i">editor</b><b class="o">=</b><b class="i">mesh_layer</b><b class="o">.</b><b class="i">meshEditor</b><b class="o">(</b><b class="o">)</b></div><div class="ln"><b class="i">editor</b><b class="o">.</b><b class="i">addPointsAsVertices</b><b class="o">(</b><b class="o">[</b><b class="i">QgsPoint</b><b class="o">(</b><b class="n">1500</b><b class="o">,</b><b class="n">2800</b><b class="o">,</b><b class="n">0</b><b class="o">)</b><b class="o">]</b><b class="o">,</b><b class="n">10</b><b class="o">)</b></div><div class="ln"><b class="i">editor</b><b class="o">.</b><b class="i">addPointsAsVertices</b><b class="o">(</b><b class="o">[</b><b class="i">QgsPoint</b><b class="o">(</b><b class="n">1800</b><b class="o">,</b><b class="n">2700</b><b class="o">,</b><b class="n">0</b><b class="o">)</b><b class="o">]</b><b class="o">,</b><b class="n">10</b><b class="o">)</b></div><div class="ln"><b class="i">editor</b><b class="o">.</b><b class="i">addPointsAsVertices</b><b class="o">(</b><b class="o">[</b><b class="i">QgsPoint</b><b class="o">(</b><b class="n">1400</b><b class="o">,</b><b class="n">2300</b><b class="o">,</b><b class="n">0</b><b class="o">)</b><b class="o">,</b><b class="i">QgsPoint</b><b class="o">(</b><b class="n">1500</b><b class="o">,</b></div><div class="ln"><b class="i">editor</b><b class="o">.</b><b class="i">addPointsAsVertices</b><b class="o">(</b><b class="o">[</b><b class="i">QgsPoint</b><b class="o">(</b><b class="n">700</b><b class="o">,</b><b class="n">1750</b><b class="o">,</b><b class="n">0</b><b class="o">)</b><b class="o">]</b><b class="o">,</b><b class="n">10</b><b class="o">)</b></div><div class="ln"><b class="i">editor</b><b class="o">.</b><b class="i">addFace</b><b class="o">(</b><b class="o">[</b><b class="n">0</b><b class="o">,</b><b class="n">6</b><b class="o">,</b><b class="n">12</b><b class="o">]</b><b class="o">)</b></div><div class="ln"><b class="i">editor</b><b class="o">.</b><b class="i">addPointsAsVertices</b><b class="o">(</b><b class="o">[</b><b class="i">QgsPoint</b><b class="o">(</b><b class="n">1400</b><b class="o">,</b><b class="n">2200</b><b class="o">,</b><b class="n">0</b><b class="o">)</b><b class="o">]</b><b class="o">,</b><b class="n">10</b><b class="o">)</b></div><div class="ln"><b class="i">editor</b><b class="o">.</b><b class="i">removeVertices</b><b class="o">(</b><b class="o">[</b><b class="n">0</b><b class="o">]</b><b class="o">,</b><b class="k">True</b><b class="o">)</b></div><div class="ln"><b class="i">editor</b><b class="o">.</b><b class="i">addFace</b><b class="o">(</b><b class="o">[</b><b class="n">12</b><b class="o">,</b><b class="n">10</b><b class="o">,</b><b class="n">8</b><b class="o">,</b><b class="n">4</b><b class="o">,</b><b class="n">5</b><b class="o">]</b><b class="o">)</b></div><div class="ln"><b class="i">editor</b><b class="o">.</b><b class="i">addFace</b><b class="o">(</b><b class="o">[</b><b class="n">6</b><b class="o">,</b><b class="n">1</b><b class="o">,</b><b class="n">11</b><b class="o">,</b><b class="n">10</b><b class="o">,</b><b class="n">12</b><b class="o">]</b><b class="o">)</b></div><div class="ln"><b class="i">editor</b><b class="o">.</b><b class="i">addFace</b><b class="o">(</b><b class="o">[</b><b class="n">6</b><b class="o">,</b><b class="n">1</b><b class="o">,</b><b class="n">11</b><b class="o">,</b><b class="n">13</b><b class="o">]</b><b class="o">)</b></div><div class="ln"><b class="i">editor</b><b class="o">.</b><b class="i">addFace</b><b class="o">(</b><b class="o">[</b><b class="n">13</b><b class="o">,</b><b class="n">10</b><b class="o">,</b><b class="n">12</b><b class="o">]</b><b class="o">)</b></div><div class="ln"><b class="i">editor</b><b class="o">.</b><b class="i">addFace</b><b class="o">(</b><b class="o">[</b><b class="n">6</b><b class="o">,</b><b class="n">13</b><b class="o">,</b><b class="n">12</b><b class="o">]</b><b class="o">)</b></div><div class="ln"><b class="i">editor</b><b class="o">.</b><b class="i">addPointsAsVertices</b><b class="o">(</b><b class="o">[</b><b class="i">QgsPoint</b><b class="o">(</b><b class="n">750</b><b class="o">,</b><b class="n">2500</b><b class="o">,</b><b class="n">550</b><b class="o">)</b><b class="o">]</b><b class="o">,</b><b class="n">10</b><b class="o">)</b></div><div class="ln"><b class="i">editor</b><b class="o">.</b><b class="i">addPointsAsVertices</b><b class="o">(</b><b class="o">[</b><b class="i">QgsPoint</b><b class="o">(</b><b class="n">1200</b><b class="o">,</b><b class="n">2500</b><b class="o">,</b><b class="n">700</b><b class="o">)</b><b class="o">]</b><b class="o">,</b><b class="n">10</b><b class="o">)</b></div><div class="ln"><b class="i">editor</b><b class="o">.</b><b class="i">removeVertices</b><b class="o">(</b><b class="o">[</b><b class="n">10</b><b class="o">]</b><b class="o">,</b><b class="k">True</b><b class="o">)</b></div><div class="ln"><b class="i">editor</b><b class="o">.</b><b class="i">removeVertices</b><b class="o">(</b><b class="o">[</b><b class="n">13</b><b class="o">]</b><b class="o">,</b><b class="k">True</b><b class="o">)</b></div><div class="ln"><b class="i">editor</b><b class="o">.</b><b class="i">removeVertices</b><b class="o">(</b><b class="o">[</b><b class="n">11</b><b class="o">]</b><b class="o">,</b><b class="k">True</b><b class="o">)</b></div><div class="ln"><b class="i">editor</b><b class="o">.</b><b class="i">removeVertices</b><b class="o">(</b><b class="o">[</b><b class="n">9</b><b class="o">]</b><b class="o">,</b><b class="k">True</b><b class="o">)</b></div><div class="ln"><b class="i">editor</b><b class="o">.</b><b class="i">removeVertices</b><b class="o">(</b><b class="o">[</b><b class="n">8</b><b class="o">]</b><b class="o">,</b><b class="k">True</b><b class="o">)</b></div><div class="ln"><b class="i">editor</b><b class="o">.</b><b class="i">removeVertices</b><b class="o">(</b><b class="o">[</b><b class="n">15</b><b class="o">]</b><b class="o">,</b><b class="k">True</b><b class="o">)</b></div><div class="ln"><b class="i">editor</b><b class="o">.</b><b class="i">removeVertices</b><b class="o">(</b><b class="o">[</b><b class="n">14</b><b class="o">]</b><b class="o">,</b><b class="k">True</b><b class="o">)</b></div><div class="ln"><b class="i">editor</b><b class="o">.</b><b class="i">removeVertices</b><b class="o">(</b><b class="o">[</b><b class="n">7</b><b class="o">]</b><b class="o">,</b><b class="k">True</b><b class="o">)</b></div><div class="ln"><b class="i">editor</b><b class="o">.</b><b class="i">removeVertices</b><b class="o">(</b><b class="o">[</b><b class="n">4</b><b class="o">]</b><b class="o">,</b><b class="k">False</b><b class="o">)</b></div><div class="ln"><b class="i">editor</b><b class="o">.</b><b class="i">removeVertices</b><b class="o">(</b><b class="o">[</b><b class="n">5</b><b class="o">]</b><b class="o">,</b><b class="k">False</b><b class="o">)</b></div><div class="ln"></div></div>
</div>
<div class="abs" style="left:973px;top:111px;width:10px;height:10px;border:1px solid #777;border-radius:2px"></div>
<svg class="ico" style="left:975px;top:113px" width="7" height="7" viewBox="0 0 7 7" ><rect x="2.5" y="0.5" width="4" height="4" fill="none" stroke="#666" stroke-width="0.9"/><rect x="0.5" y="2.5" width="4" height="4" fill="#eff0f1" stroke="#666" stroke-width="0.9"/></svg>
<div class="abs" style="left:986px;top:111px;width:10px;height:10px;border:1px solid #777;border-radius:2px"></div>
<svg class="ico" style="left:987px;top:112px" width="8" height="8" viewBox="0 0 8 8" ><path d="M1.5 1.5L6.5 6.5M6.5 1.5L1.5 6.5" stroke="#333" stroke-width="1.8"/></svg>
<svg class="ico" style="left:434px;top:131px" width="16" height="16" viewBox="0 0 16 16" ><path d="M0.5 4H5L7 6H14.5V15H0.5Z" fill="#f2cf55" stroke="#d6ad2c" stroke-width="0.8"/><path d="M1 15L3.5 8H15.5L14 15Z" fill="#f8dc6a"/><rect x="3" y="0.5" width="7" height="6" rx="1" fill="#5b8fcf"/><rect x="5" y="3" width="5" height="3" fill="#f6d24a"/></svg>
<svg class="ico" style="left:459px;top:131px" width="17" height="17" viewBox="0 0 17 17" ><path d="M0.5 0.5H9L12 3.5V15.5H0.5Z" fill="#f4f4f4" stroke="#9a9a9a"/><path d="M2.5 5H9M2.5 8H9M2.5 11H8" stroke="#555"/><path d="M14 6L16.5 8L9 16L6.5 16.5L7 14Z" fill="#ef7c1a" stroke="#b85a10" stroke-width="0.6"/></svg>
<div class="abs" style="left:480px;top:132px;width:1px;height:14px;background:#d0d0d0"></div>
<svg class="ico" style="left:487px;top:131px" width="16" height="16" viewBox="0 0 16 16" ><rect x="0.5" y="0.5" width="14" height="14" rx="2" fill="#dcdcdc" stroke="#cfcfcf"/><rect x="3" y="2" width="9" height="4" fill="#ececec"/><rect x="3" y="9" width="9" height="5" fill="#ececec"/></svg>
<svg class="ico" style="left:511px;top:131px" width="17" height="17" viewBox="0 0 17 17" ><rect x="0.5" y="0.5" width="14" height="14" rx="2" fill="#5a82bd" stroke="#4a6fa8"/><rect x="3" y="2" width="9" height="4.5" fill="#d5d5d5"/><rect x="3" y="9" width="6" height="5" fill="#d5d5d5"/><rect x="4" y="10.5" width="2" height="2" fill="#345"/><rect x="9" y="9" width="8" height="8" rx="1" fill="#3b9a3b"/><path d="M10.5 13L12.5 15L15.5 11" stroke="#fff" stroke-width="1.4" fill="none"/></svg>
<div class="abs" style="left:533px;top:132px;width:1px;height:14px;background:#d0d0d0"></div>
<svg class="ico" style="left:541px;top:132px" width="13" height="14" viewBox="0 0 13 14" ><path d="M1 0.5L12 7L1 13.5Z" fill="#4c9a55" stroke="#3e8a47" stroke-width="0.6"/></svg>
<div class="abs" style="left:562px;top:132px;width:1px;height:14px;background:#d0d0d0"></div>
<svg class="ico" style="left:569px;top:133px" width="17" height="12" viewBox="0 0 17 12" ><path d="M0 2L10 7M0 9L10 4" stroke="#888" stroke-width="1.2"/><circle cx="13.5" cy="2.5" r="2" fill="none" stroke="#c81a1a" stroke-width="1.3"/><circle cx="13.5" cy="9" r="2" fill="none" stroke="#c81a1a" stroke-width="1.3"/></svg>
<svg class="ico" style="left:593px;top:131px" width="15" height="16" viewBox="0 0 15 16" ><rect x="5" y="0.5" width="9" height="11" rx="1" fill="#e9e9e9" stroke="#aaa"/><rect x="0.5" y="4" width="9" height="11.5" rx="1" fill="#ececec" stroke="#999"/><path d="M2 9H8M2 11H8" stroke="#aaa"/></svg>
<svg class="ico" style="left:618px;top:131px" width="15" height="16" viewBox="0 0 15 16" ><rect x="0.5" y="1" width="13" height="14.5" rx="1" fill="#f2c48a" stroke="#c98f4c"/><rect x="3" y="4" width="8" height="10" fill="#eee" stroke="#999" stroke-width="0.7"/><rect x="4" y="0" width="6" height="3" fill="#999"/><path d="M4.5 7H9.5M4.5 9H9.5M4.5 11H9.5" stroke="#999" stroke-width="0.8"/></svg>
<div class="abs" style="left:640px;top:132px;width:1px;height:14px;background:#d0d0d0"></div>
<svg class="ico" style="left:646px;top:131px" width="16" height="16" viewBox="0 0 16 16" ><circle cx="6" cy="6" r="4.8" fill="#f5f5f5" stroke="#555" stroke-width="1.3"/><path d="M9.5 9.5L14.5 14.5" stroke="#d9a520" stroke-width="2.3"/></svg>
<div class="abs" style="left:669px;top:132px;width:1px;height:14px;background:#d0d0d0"></div>
<svg class="ico" style="left:676px;top:132px" width="13" height="14" viewBox="0 0 13 14" ><path d="M5.5 0.5L3.5 13.5M10 0.5L8 13.5M0.5 4.5H12M0 9.5H11.5" stroke="#3a3a3a" stroke-width="1.7"/></svg>
<svg class="ico" style="left:700px;top:132px" width="13" height="14" viewBox="0 0 13 14" ><path d="M5.5 0.5L3.5 13.5M10 0.5L8 13.5M0.5 4.5H12M0 9.5H11.5" stroke="#3a3a3a" stroke-width="1.7"/></svg>
<svg class="ico" style="left:707px;top:139px" width="8" height="8" viewBox="0 0 8 8" ><circle cx="4" cy="4" r="3.8" fill="#e41e1e"/><path d="M2.5 4.5A2 2 0 1 1 4.5 6.5" stroke="#fff" stroke-width="1.2" fill="none"/></svg>
<div class="abs" style="left:722px;top:132px;width:1px;height:14px;background:#d0d0d0"></div>
<svg class="ico" style="left:729px;top:131px" width="13" height="16" viewBox="0 0 13 16" ><rect x="0.5" y="0.5" width="3" height="3" fill="#e0e0e0" stroke="#ccc"/><rect x="8" y="6" width="4" height="3" fill="#d0dbe5"/><rect x="8" y="12" width="4" height="3" fill="#d0dbe5"/><path d="M2 3V13.5H8M2 7.5H8" stroke="#d5d5d5" fill="none"/></svg>
<svg class="ico" style="left:436px;top:160px" width="16" height="16" viewBox="0 0 16 16" ><path d="M5 0.8H11V5H15.2V11H11V15.2H5V11H0.8V5H5Z" fill="#fff" stroke="#4d9a4d" stroke-width="1.5"/><path d="M8 3.5V12.5M3.5 8H12.5" stroke="#4d9a4d" stroke-width="2.2"/></svg>
<div class="abs" style="left:460px;top:153px;width:160px;height:31px;background:#fff;border:1px solid #c1c2c3;border-bottom:none;border-radius:3px 3px 0 0"></div>
<svg class="ico" style="left:472px;top:160px" width="14" height="15" viewBox="0 0 14 15" ><rect x="0.5" y="0.5" width="10" height="14" rx="1" fill="#f2f2f2" stroke="#aaa"/><path d="M2.5 5H8M2.5 8H8M2.5 11H8" stroke="#777"/><circle cx="10" cy="4" r="3.2" fill="#4b7fc0"/><circle cx="11" cy="6" r="2.5" fill="#f5cc30"/></svg>
<div class="abs" style="left:491px;top:161px;font-size:13.7px;color:#31363b">meshEditing.py</div>
<svg class="ico" style="left:590px;top:161px" width="15" height="14" viewBox="0 0 15 14" ><path d="M2 1Q7 6 13 13" stroke="#1a1a1a" stroke-width="2.6" fill="none"/><path d="M12 1Q7 6 2 13" stroke="#1a1a1a" stroke-width="1.4" fill="none"/><path d="M9 10L13 12" stroke="#1a1a1a" stroke-width="2"/></svg>
<svg class="ico" style="left:972px;top:162px" width="20" height="14" viewBox="0 0 20 14" ><path d="M0 1H19L9.5 13Z" fill="#3d3b3c"/></svg>
<svg class="ico" style="left:991px;top:177px" width="6" height="3" viewBox="0 0 6 3" ><path d="M0 0H6L3 3Z" fill="#777"/></svg>
<svg class="ico" style="left:589px;top:205px" width="9" height="21" viewBox="0 0 9 21" ><path d="M1.5 2.5H7.5M4.5 2.5V18.5M1.5 18.5H7.5" stroke="#fff" stroke-width="3" opacity="0.6"/><path d="M1.5 2.5H7.5M4.5 2.5V18.5M1.5 18.5H7.5" stroke="#333" stroke-width="1.2"/></svg>
<div class="dots" style="left:419px;top:428px;height:18px;width:3px;background-size:3px 3px"></div><div class="dots" style="left:424px;top:423px;height:18px;width:3px;background-size:3px 3px"></div>
<div class="abs" style="left:984px;top:184px;width:14px;height:537px;background:#f3f3f3;border-left:1px solid #d0d0d0"></div>
<div class="abs" style="left:984px;top:184px;width:14px;height:13px;background:#fafafa;border-left:1px solid #d0d0d0;border-bottom:1px solid #d6d6d6"></div>
<svg class="ico" style="left:987px;top:188px" width="8" height="5" viewBox="0 0 8 5" ><path d="M0 4.5L4 0.5L8 4.5Z" fill="#444"/></svg>
<div class="abs" style="left:985px;top:690px;width:13px;height:16px;background:#dadada;border-top:1px solid #c8c8c8"></div>
<div class="abs" style="left:984px;top:706px;width:14px;height:15px;background:#fafafa;border-left:1px solid #d0d0d0;border-top:1px solid #d6d6d6"></div>
<svg class="ico" style="left:987px;top:711px" width="8" height="5" viewBox="0 0 8 5" ><path d="M0 0.5L4 4.5L8 0.5Z" fill="#444"/></svg>
<div class="abs" style="left:430px;top:721px;width:568px;height:13px;background:#e3e3e3;border-top:1px solid #cdcdcd"></div>
<div class="abs" style="left:430px;top:722px;width:12px;height:12px;background:#f5f5f5;border-right:1px solid #d0d0d0"></div>
<svg class="ico" style="left:433px;top:724px" width="5" height="8" viewBox="0 0 5 8" ><path d="M4.5 0L0.5 4L4.5 8Z" fill="#555"/></svg>
<div class="abs" style="left:442px;top:722px;width:133px;height:12px;background:linear-gradient(#fbfbfb,#f1f1f1);border-right:1px solid #c8c8c8"></div>
<div class="abs" style="left:972px;top:722px;width:12px;height:12px;background:#f5f5f5;border-left:1px solid #d0d0d0"></div>
<svg class="ico" style="left:976px;top:724px" width="5" height="8" viewBox="0 0 5 8" ><path d="M0.5 0L4.5 4L0.5 8Z" fill="#555"/></svg>
<div class="abs" style="left:984px;top:721px;width:14px;height:13px;background:#efeff0;border-left:1px solid #d0d0d0;border-top:1px solid #cdcdcd"></div>
<div class="abs" style="left:428px;top:734px;width:570px;height:1px;background:#c5c5c5"></div>
<div class="abs" style="left:541px;top:737px;width:141px;height:24px;border:1px solid #c3c4c5;border-top:none;border-radius:0 0 3px 3px;background:linear-gradient(#e2e3e4,#dcdddf)"></div>
<div class="abs" style="left:553px;top:742px;font-size:13.5px;color:#31363b">Processing Toolbox</div>
<div class="abs" style="left:683px;top:737px;width:100px;height:24px;border:1px solid #c3c4c5;border-top:none;border-radius:0 0 3px 3px;background:linear-gradient(#e2e3e4,#dcdddf)"></div>
<div class="abs" style="left:693px;top:742px;font-size:13.5px;color:#31363b">Layer Styling</div>
<div class="abs" style="left:423px;top:735px;width:118px;height:28px;border:1px solid #c3c4c5;border-radius:3px 3px 3px 3px;background:linear-gradient(#f4f5f6,#eeeff0)"></div>
<div class="abs" style="left:434px;top:742px;font-size:13.5px;color:#31363b">Python Console</div>
</body></html>
